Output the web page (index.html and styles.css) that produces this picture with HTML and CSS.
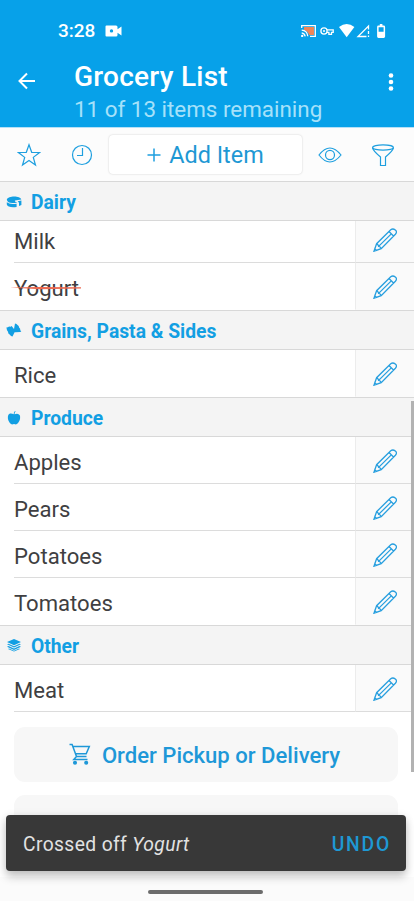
FILE: index.html
```html
<!DOCTYPE html>
<html lang="en">
<head>
<meta charset="utf-8">
<title>Grocery List</title>
<link rel="stylesheet" href="styles.css">
</head>
<body>
<svg class="defs" aria-hidden="true">
  <symbol id="pencil" viewBox="0 0 24 24">
    <path d="M1 23.200 3.600 15.700 17.700 1.700Q20 .2 22.300 2T22.400 6.300L8.200 20.600ZM3.600 15.700Q5 16 5.600 18.400 7.800 18.800 8.200 20.600M16 3.500 20.500 8M5.600 18.400 18.300 5.900M1 23.200 3.400 22.400 1.800 20.800Z"/>
  </symbol>
</svg>
<header class="appbar">
  <div class="status">
    <span class="time">3:28</span>
    <svg class="cam" width="17" height="12" viewBox="0 0 17 12"><path fill="#fff" fill-rule="evenodd" d="M1.500.5h9.500q1.500 0 1.500 1.500v2.300L16.500 1.500v9L12.500 7.700V10q0 1.500-1.500 1.500H1.500Q.5 11.500.5 10.500v-9Q.5.5 1.500.5ZM6.500 4.200a1.700 1.700 0 1 0 0 3.400 1.700 1.700 0 0 0 0-3.400Z"/></svg>
    <svg class="sysicons" width="86" height="16" viewBox="300 23 86 16">
      <path fill="#ee8558" d="M304 27h10v8h-5q-1-4-5-5Z"/>
      <g fill="none" stroke="#fff" stroke-width="1.300">
        <path d="M301.700 28v-2.300h13.600v10.600H310M301.700 30.200q5.600.4 6.100 6.100M301.700 32.800q3 .5 3.500 3.500"/>
        <circle cx="324" cy="31" r="3.100"/>
        <path d="M327 29.800h6.200v2.600h-1.700v2h-2.600v-2H327"/>
        <path d="M366.500 36.500H358l10.500-10.500v3.500M368.500 31v3M368.500 35.500V37"/>
      </g>
      <circle cx="324" cy="31" r="1" fill="#fff"/><circle cx="302.200" cy="35.900" r="1.200" fill="#fff"/>
      <path fill="#fff" d="M339 27q7.700-6 15.400 0L346.700 37.300Z"/>
      <path fill="#fff" fill-rule="evenodd" d="M378.500 25.500h1.300V24h2.600v1.500h1.300q1.400 0 1.400 1.400v9.700q0 1.400-1.400 1.400h-5.200q-1.400 0-1.400-1.400v-9.700q0-1.400 1.400-1.400ZM378.600 27.200v4.500h5v-4.500Z"/>
    </svg>
  </div>
  <div class="titlebar">
    <svg class="back" width="18" height="18" viewBox="0 0 18 18"><path d="M17 9H2M9 1.500 1.500 9 9 16.500"/></svg>
    <div class="titles">
      <h1>Grocery List</h1>
      <p>11 of 13 items remaining</p>
    </div>
    <svg class="more" width="6" height="18" viewBox="0 0 6 18"><circle cx="3" cy="2.500" r="2.300"/><circle cx="3" cy="9" r="2.300"/><circle cx="3" cy="15.500" r="2.300"/></svg>
  </div>
</header>

<nav class="tools">
  <span class="tool"><svg width="24" height="24" viewBox="0 0 24 24"><path d="m12 1.700 2.700 7.600 7.900.2-6.300 4.900 2.200 7.700L12 17.600l-6.500 4.500 2.200-7.700L1.400 9.500l7.900-.2Z"/></svg></span>
  <span class="tool"><svg width="24" height="24" viewBox="0 0 24 24"><circle cx="12" cy="12" r="9.500"/><path d="M12.500 5v7.500H7"/></svg></span>
  <button class="add"><svg width="14" height="14" viewBox="0 0 14 14"><path d="M7 .5v13M.5 7h13"/></svg>Add Item</button>
  <span class="tool"><svg width="24" height="24" viewBox="0 0 24 24"><path d="M1 12Q11.800-2 23 12 11.800 26 1 12Z"/><ellipse cx="12" cy="12" rx="4.500" ry="4.700"/></svg></span>
  <span class="tool"><svg width="24" height="24" viewBox="0 0 24 24"><ellipse cx="12" cy="4.500" rx="10.400" ry="2.700"/><path d="M1.600 4.800Q2 7.500 9.500 14v8.500h5V14Q22 7.500 22.400 4.800"/></svg></span>
</nav>

<main class="list">
  <h2 class="cat"><svg width="16" height="16" viewBox="0 0 16 16"><path d="M.8 5.500C2 1.400 14.500 1.400 15.300 5.500L9 6.600q-.5.600.3 1.100l2 .8Q1.500 10.500.8 5.500ZM.8 8.300Q4 11 10.600 9.700V13Q2 14 .8 10.600ZM11.700 7.200l3.700-.7v4.400l-2.400 1.200V8.700Z"/></svg>Dairy</h2>
  <div class="item first"><span class="name">Milk</span><span class="edit"><svg><use href="#pencil"/></svg></span></div>
  <div class="item last"><span class="name"><span class="crossed">Yogurt<svg class="strike" viewBox="0 0 72 4" preserveAspectRatio="none"><path d="M0 1.600 29 1 71 1.200V2.400L30 3.300Z"/></svg></span></span><span class="edit"><svg><use href="#pencil"/></svg></span></div>

  <h2 class="cat"><svg width="16" height="16" viewBox="0 0 16 16"><path d="m.4 4.500 1.500-.3 1.200-.6 1.500.1 1-.6L8 6 9 .5l1.500.4 1 1.200 1.200.9.400 1.600 1 1.100.2 1.600 1 1.300-1.100.5-4.600.2L8.600 9.200 6.500 13.400l-1.500-.3-1.100-1.300-1.500-1.200-.4-1.900-1-1.500Z"/></svg>Grains, Pasta &amp; Sides</h2>
  <div class="item last"><span class="name">Rice</span><span class="edit"><svg><use href="#pencil"/></svg></span></div>

  <h2 class="cat"><svg width="16" height="16" viewBox="0 0 16 16"><path d="M7.700 4.300Q7.500 2.500 9 1l.6.300Q8.500 2.700 8.500 4.300 12 2.600 13.800 5.200C15.200 9.500 12 14 10 14.400L8 14l-2 .4C4 14 .8 9.500 2.200 5.200 4 2.600 6 3.700 7.700 4.300Z"/></svg>Produce</h2>
  <div class="item"><span class="name">Apples</span><span class="edit"><svg><use href="#pencil"/></svg></span></div>
  <div class="item"><span class="name">Pears</span><span class="edit"><svg><use href="#pencil"/></svg></span></div>
  <div class="item"><span class="name">Potatoes</span><span class="edit"><svg><use href="#pencil"/></svg></span></div>
  <div class="item last"><span class="name">Tomatoes</span><span class="edit"><svg><use href="#pencil"/></svg></span></div>

  <h2 class="cat"><svg width="16" height="16" viewBox="0 0 16 16"><path d="m8 1 7 3-7 3.200L1 4ZM1 6.300l1.500-.6L8 8.200l5.500-2.500 1.500.6-7 3.300ZM1 8.700l1.500-.6L8 10.600l5.500-2.500 1.500.6L8 12ZM2 10.900l1-.3 5 2.100 5-2.100 1 .3-6 2.700Z"/></svg>Other</h2>
  <div class="item"><span class="name">Meat</span><span class="edit"><svg><use href="#pencil"/></svg></span></div>

  <div class="cards">
    <button class="card"><svg width="22" height="22" viewBox="0 0 22 22"><path d="M.5 1.500h2.600L7.500 13.500h10M4 3.500H20.300L17.200 10.700H6.500M7.500 13.500 4.800 16.500H18.500"/><circle cx="6" cy="19.800" r="1.300"/><circle cx="17.200" cy="19.800" r="1.300"/></svg>Order Pickup or Delivery</button>
    <div class="card"></div>
  </div>
</main>

<div class="scrollbar"></div>
<div class="navbar"><i></i></div>
<div class="snackbar"><span>Crossed off <em>Yogurt</em></span><b>UNDO</b></div>
</body>
</html>
```
FILE: styles.css
```css
* { box-sizing: border-box; }
body {
  margin: 0;
  width: 414px;
  height: 901px;
  overflow: hidden;
  position: relative;
  background: #fff;
  color: #3f3f42;
  font-family: Roboto, sans-serif;
}
.defs { position: absolute; width: 0; height: 0; }
h1, h2, p { margin: 0; font-weight: 400; }
button { font-family: inherit; border: 0; padding: 0; }

.appbar { height: 127px; background: #07a1e9; color: #fff; }
.status {
  height: 58px;
  padding: 4px 28px 0 58px;
  display: flex;
  align-items: center;
}
.time { font-size: 19px; font-weight: 500; line-height: 22px; }
.cam { margin-left: 10px; }
.sysicons { margin-left: auto; }
.titlebar { display: flex; height: 69px; }
.back { margin: 14px 0 0 18px; fill: none; stroke: #fff; stroke-width: 2; }
.titles { margin-left: 38px; flex: 1; }
.titles h1 { font-size: 28px; letter-spacing: .25px; font-weight: 500; line-height: 37px; white-space: nowrap; }
.titles p { font-size: 22.4px; line-height: 29px; color: #a6e1fa; white-space: nowrap; }
.more { margin: 15px 20px 0 0; fill: #fff; }

.tools {
  height: 54px;
  padding: 0 4px 0 3px;
  display: flex;
  align-items: center;
  background: #fcfcfc;
  border-top: 1px solid #b5e0f7;
}
.tool { flex: 0 0 53px; display: flex; justify-content: center; }
.tool svg, .add svg { fill: none; stroke: #1e9fdf; stroke-width: 1.2; }
.tool:first-child { flex-basis: 52px; }
.add {
  flex: 0 0 193px;
  margin: 0 1px;
  height: 39px;
  display: flex;
  align-items: center;
  justify-content: center;
  gap: 8px;
  background: #fff;
  border-radius: 4px;
  box-shadow: 0 0 2px rgba(0, 0, 0, .2);
  color: #1e98d4;
  font-size: 23.4px;
}
.add svg { stroke-width: 1.5; }

.cat {
  height: 40px;
  display: flex;
  align-items: center;
  gap: 9px;
  padding: 2px 0 0 6px;
  background: #f4f4f4;
  border-top: 1px solid #d8d8d8;
  border-bottom: 1px solid #d8d8d8;
  color: #129fe3;
  font-size: 19.3px;
  font-weight: 700;
}
.cat svg { fill: #129fe3; }

.item { height: 47px; display: flex; padding-left: 14px; }
.item.first { height: 42px; }
.name {
  flex: 1;
  display: flex;
  align-items: center;
  padding-top: 3px;
  border-bottom: 1px solid #dcdcdc;
  font-size: 22.1px;
}
.edit {
  width: 59px;
  display: flex;
  align-items: center;
  justify-content: center;
  padding-top: 2px;
  background: #fafafa;
  border-left: 1px solid #ececec;
  border-bottom: 1px solid #dcdcdc;
}
.edit svg { width: 24px; height: 24px; fill: none; stroke: #289fdf; stroke-width: 1.3; }
.item.last .name, .item.last .edit { border-bottom-color: transparent; }
.item.first .name { padding: 0 0 2px; }
.item.first .edit { padding: 0 0 3px; }
.crossed { position: relative; }
.strike { position: absolute; left: -4px; top: 11px; width: 72px; height: 4px; fill: #ec6951; }

.cards { padding: 15px 16px 0 14px; }
.card {
  width: 100%;
  height: 55px;
  margin-bottom: 13px;
  padding: 1px 3px 0 0;
  display: flex;
  align-items: center;
  justify-content: center;
  gap: 11px;
  border-radius: 11px;
  background: #f7f7f7;
  color: #1e98d8;
  font-size: 22.1px;
  font-weight: 500;
  white-space: nowrap;
}
.card svg { margin-top: -3px; fill: none; stroke: #1e98d8; stroke-width: 1.5; }
.card circle { fill: #1e98d8; }

.scrollbar { position: absolute; right: 0; top: 401px; width: 3px; height: 371px; background: #b2b2b2; }
.navbar {
  position: absolute;
  left: 0;
  right: 0;
  bottom: 0;
  height: 24px;
  background: #fbfbfb;
}
.navbar i { display: block; width: 115px; height: 4px; margin: 13px 0 0 148px; border-radius: 2px; background: #6c6c6c; }
.snackbar {
  position: absolute;
  left: 6px;
  right: 8px;
  top: 815px;
  height: 56px;
  padding: 2px 15px 0 17px;
  display: flex;
  align-items: center;
  justify-content: space-between;
  background: #383838;
  border-radius: 4px;
  box-shadow: 0 6px 10px rgba(0, 0, 0, .2), 0 1px 8px rgba(0, 0, 0, .1);
  color: #e2e2e2;
  font-size: 19.3px;
  letter-spacing: .37px;
}
.snackbar b { color: #1e98d4; font-weight: 500; letter-spacing: 1.8px; }
```
